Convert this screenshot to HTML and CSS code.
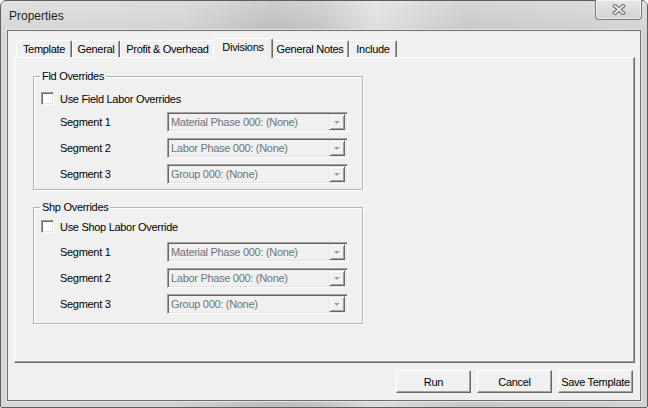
FILE: index.html
```html
<html>

<head>
    <title>Properties</title>
    <link rel="stylesheet" href="styles.css">
</head>

<body>
    <div class="window">
        <div class="titlebar">
            <span class="title">Properties</span>
            <div class="close-btn">
                <svg width="14" height="11" viewBox="0 0 14 11">
                    <path d="M3 2 L11 9 M11 2 L3 9" stroke="#6a6a6a" stroke-width="4" stroke-linecap="square" />
                    <path d="M3 2 L11 9 M11 2 L3 9" stroke="#e9e9e9" stroke-width="2" stroke-linecap="square" />
                </svg>
            </div>
        </div>

        <div class="client">
            <div class="tabs">
                <div class="tab tab-template">Template</div>
                <div class="tab tab-general">General</div>
                <div class="tab tab-profit">Profit &amp; Overhead</div>
                <div class="tab tab-divisions selected">Divisions</div>
                <div class="tab tab-notes">General Notes</div>
                <div class="tab tab-include">Include</div>
            </div>

            <div class="tab-panel">
                <fieldset class="group group-fld">
                    <legend>Fld Overrides</legend>
                    <div class="check-row">
                        <span class="checkbox"></span>
                        <span>Use Field Labor Overrides</span>
                    </div>
                    <div class="segments">
                        <div class="segment-row">
                            <span class="segment-label">Segment 1</span>
                            <div class="combo"><span class="combo-text">Material Phase 000: (None)</span><span class="combo-btn"><span class="arrow"></span></span></div>
                        </div>
                        <div class="segment-row">
                            <span class="segment-label">Segment 2</span>
                            <div class="combo"><span class="combo-text">Labor Phase 000: (None)</span><span class="combo-btn"><span class="arrow"></span></span></div>
                        </div>
                        <div class="segment-row">
                            <span class="segment-label">Segment 3</span>
                            <div class="combo"><span class="combo-text">Group 000: (None)</span><span class="combo-btn"><span class="arrow"></span></span></div>
                        </div>
                    </div>
                </fieldset>

                <fieldset class="group group-shp">
                    <legend>Shp Overrides</legend>
                    <div class="check-row">
                        <span class="checkbox"></span>
                        <span>Use Shop Labor Override</span>
                    </div>
                    <div class="segments">
                        <div class="segment-row">
                            <span class="segment-label">Segment 1</span>
                            <div class="combo"><span class="combo-text">Material Phase 000: (None)</span><span class="combo-btn"><span class="arrow"></span></span></div>
                        </div>
                        <div class="segment-row">
                            <span class="segment-label">Segment 2</span>
                            <div class="combo"><span class="combo-text">Labor Phase 000: (None)</span><span class="combo-btn"><span class="arrow"></span></span></div>
                        </div>
                        <div class="segment-row">
                            <span class="segment-label">Segment 3</span>
                            <div class="combo"><span class="combo-text">Group 000: (None)</span><span class="combo-btn"><span class="arrow"></span></span></div>
                        </div>
                    </div>
                </fieldset>
            </div>

            <div class="button-row">
                <div class="btn">Run</div>
                <div class="btn">Cancel</div>
                <div class="btn">Save Template</div>
            </div>
        </div>
    </div>
</body>

</html>
```

FILE: styles.css
```css
* {
    font-family: "Liberation Sans", Arial, sans-serif;
    box-sizing: border-box;
}

html, body {
    margin: 0;
    padding: 0;
    width: 648px;
    height: 408px;
    overflow: hidden;
    background: #ffffff;
}

.window {
    width: 648px;
    height: 408px;
    border: 1px solid #5e5e5e;
    border-radius: 6px 6px 2px 2px;
    background: linear-gradient(to right, #d8d8d8 0%, #d2d2d2 28%, #bdbdbd 42%, #c6c6c6 50%, #dedede 58%, #c8c8c8 72%, #d4d4d4 100%);
    display: flex;
    flex-direction: column;
}

.titlebar {
    height: 29px;
    display: flex;
    align-items: flex-start;
    background: linear-gradient(to bottom, rgba(255, 255, 255, 0.25), rgba(255, 255, 255, 0));
}

.title {
    font-size: 12px;
    color: #1e1e1e;
    padding: 8px 0 0 8px;
}

.close-btn {
    margin-left: auto;
    margin-right: 5px;
    margin-top: -1px;
    width: 47px;
    height: 20px;
    border: 1px solid #7a7a7a;
    border-top: none;
    border-radius: 0 0 4px 4px;
    background: linear-gradient(to bottom, #e6e6e6, #d2d2d2);
    box-shadow: inset 0 0 0 1px rgba(255, 255, 255, 0.6);
    display: flex;
    align-items: center;
    justify-content: center;
}

.client {
    flex: 1;
    margin: 0 6px 6px 6px;
    border: 1px solid #6d6d6d;
    box-shadow: 0 0 0 1px #e6e6e6;
    background: #f0f0f0;
    display: flex;
    flex-direction: column;
    padding: 7px 5px 7px 6px;
    font-size: 11px;
    letter-spacing: -0.3px;
    color: #000;
}

.tabs {
    display: flex;
    align-items: flex-end;
    height: 19px;
    padding-left: 2px;
}

.tab {
    height: 17px;
    border-top: 1px solid #ffffff;
    border-left: 1px solid #ffffff;
    border-right: 1px solid #696969;
    box-shadow: inset -1px 0 #a0a0a0;
    border-radius: 2px 2px 0 0;
    display: flex;
    align-items: center;
    justify-content: center;
    font-size: 11px;
    color: #000;
    padding-bottom: 1px;
}

.tab-template { width: 56px; }
.tab-general { width: 48px; }
.tab-profit { width: 95px; }
.tab-notes { width: 78px; }
.tab-include { width: 48px; }

.tab.selected {
    width: 60px;
    height: 20px;
    margin: 0 -2px -1px -2px;
    position: relative;
    z-index: 1;
    background: #f0f0f0;
    padding-bottom: 3px;
}

.tab-panel {
    flex: 1;
    border: 1px solid;
    border-color: #ffffff #696969 #696969 #ffffff;
    box-shadow: inset -1px -1px #a0a0a0;
    padding: 12px 0 0 18px;
    display: flex;
    flex-direction: column;
}

.group {
    width: 330px;
    margin: 0;
    padding: 0 0 5px 0;
    border: 1px solid #b4b4b4;
    box-shadow: inset 1px 1px #ffffff, 1px 1px #ffffff;
}

.group legend {
    margin-left: 6px;
    padding: 0 2px;
    font-size: 11px;
    line-height: 13px;
    color: #000;
}

.group-shp {
    margin-top: 11px;
    padding-bottom: 9px;
}

.check-row {
    display: flex;
    align-items: center;
    height: 13px;
    margin-top: 9px;
    padding-left: 7px;
}

.group-shp .check-row {
    margin-top: 6px;
}

.checkbox {
    width: 13px;
    height: 13px;
    margin-right: 6px;
    border: 1px solid;
    border-color: #a0a0a0 #ffffff #ffffff #a0a0a0;
    box-shadow: inset 1px 1px #696969, inset -1px -1px #e3e3e3;
    background: #ffffff;
}

.segments {
    display: flex;
    flex-direction: column;
    gap: 6px;
    margin-top: 7px;
    padding-left: 26px;
}

.group-shp .segments {
    margin-top: 9px;
}

.segment-row {
    display: flex;
    align-items: center;
    height: 20px;
}

.segment-label {
    width: 107px;
}

.combo {
    width: 181px;
    height: 20px;
    border: 1px solid;
    border-color: #a0a0a0 #ffffff #ffffff #a0a0a0;
    box-shadow: inset 1px 1px #696969, inset -1px -1px #e3e3e3;
    background: #f0f0f0;
    display: flex;
    align-items: center;
    padding: 0 2px 0 3px;
}

.combo-text {
    flex: 1;
    color: #6d747c;
    white-space: nowrap;
}

.combo-btn {
    width: 16px;
    height: 16px;
    border: 1px solid;
    border-color: #e3e3e3 #696969 #696969 #e3e3e3;
    box-shadow: inset 1px 1px #ffffff, inset -1px -1px #a0a0a0;
    background: #f0f0f0;
    display: flex;
    align-items: center;
    justify-content: center;
}

.arrow {
    width: 0;
    height: 0;
    border-left: 3px solid transparent;
    border-right: 3px solid transparent;
    border-top: 3px solid #a0a0a0;
    filter: drop-shadow(1px 1px 0 #ffffff);
}

.button-row {
    display: flex;
    justify-content: flex-end;
    gap: 6px;
    margin-top: 7px;
    padding-right: 2px;
}

.btn {
    width: 75px;
    height: 23px;
    border: 1px solid;
    border-color: #ffffff #696969 #696969 #ffffff;
    box-shadow: inset -1px -1px #a0a0a0;
    background: #f0f0f0;
    display: flex;
    align-items: center;
    justify-content: center;
    font-size: 11px;
    color: #000;
}
```
